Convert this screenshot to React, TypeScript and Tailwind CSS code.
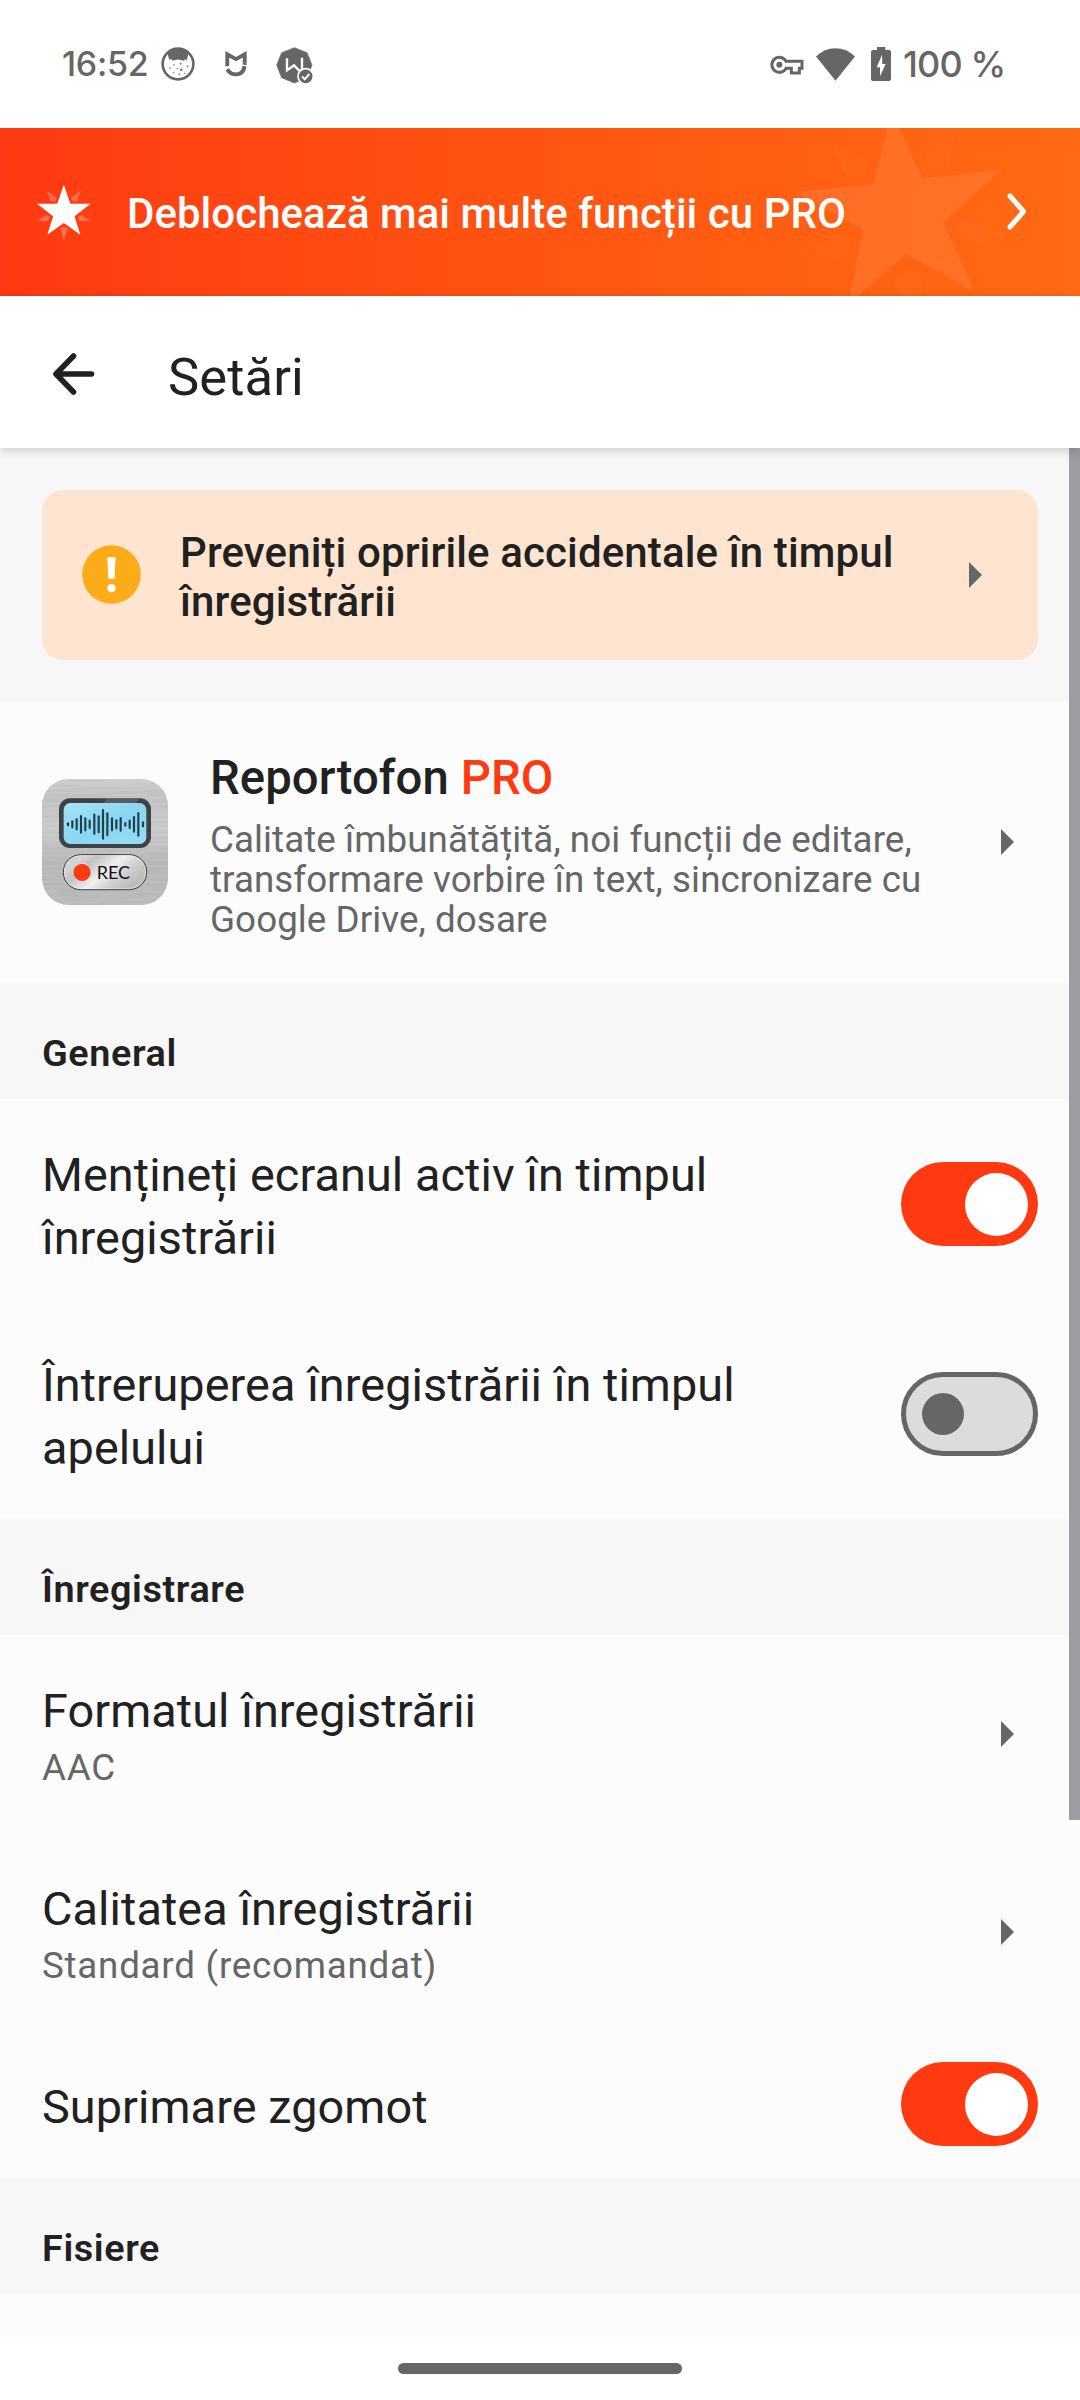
import type { ReactNode } from 'react';

/* ---------- Status bar ---------- */

function CatIcon() {
  return (
    <svg className="h-[34px] w-[34px]" viewBox="363 83 102 102">
      <circle cx="414" cy="134" r="46" fill="#fff" stroke="#666" strokeWidth="8" />
      <path d="M384 108 L388 122 L394 118 L397 124 L408 121 Q414 119 422 122 L432 124 L436 119 L440 124 L444 108 L444 102 Q414 76 384 102 Z" fill="#666" />
      <g fill="#666">
        <circle cx="402" cy="137" r="2.5" />
        <circle cx="422" cy="133" r="2.5" />
        <circle cx="390" cy="146" r="2.5" />
        <circle cx="412" cy="148" r="2" />
        <circle cx="424" cy="151" r="3.5" />
        <circle cx="442" cy="141" r="2.5" />
        <circle cx="400" cy="160" r="2" />
        <circle cx="418" cy="165" r="2.5" />
        <circle cx="434" cy="162" r="2" />
      </g>
    </svg>
  );
}

function MiIcon() {
  return (
    <svg className="h-[26px] w-[22px]" viewBox="554 94 68 80" fill="none" stroke="#666" strokeWidth="12">
      <path d="M561 141 V104 L588 119 L615 104 V130" />
      <path d="M561 150 Q570 166 589 166 Q615 165 615 130" />
      <path d="M552 146 L574 142" stroke="#fff" strokeWidth="4" />
      <path d="M600 136 L624 140" stroke="#fff" strokeWidth="4" />
    </svg>
  );
}

function OctagonIcon() {
  return (
    <svg className="h-[37px] w-[37px]" viewBox="707 80 111 111">
      <path d="M762 82 L800 97 L815 134 L800 172 L762 188 L724 172 L709 134 L724 97 Z" fill="#666" stroke="#666" strokeWidth="2" strokeLinejoin="round" />
      <path d="M740 114 V150 L761 135 L778 152 L785 148 V112" fill="none" stroke="#fff" strokeWidth="7" />
      <circle cx="796" cy="168" r="23" fill="#666" stroke="#fff" strokeWidth="5" />
      <path d="M785 168 L793 177 L807 161" fill="none" stroke="#fff" strokeWidth="6" />
    </svg>
  );
}

function KeyIcon() {
  return (
    <svg className="h-[20px] w-[34px]" viewBox="89 104 102 60">
      <path d="M137 123 H185 V144 H177 V158 H153 V144 H137 A22.5 22.5 0 1 1 137 123 Z" fill="none" stroke="#666" strokeWidth="9" />
      <circle cx="117" cy="133" r="9" fill="#666" />
    </svg>
  );
}

function WifiIcon() {
  return (
    <svg className="h-[33px] w-[39px]" viewBox="228 80 118 100">
      <path d="M287 179 L228 106 Q254 81 287 81 Q320 81 346 106 Z" fill="#666" />
    </svg>
  );
}

function BatteryIcon() {
  return (
    <svg className="h-[34px] w-[20px]" viewBox="393 78 60 102">
      <path d="M411 78 H436 V87 H447 Q453 87 453 93 V174 Q453 180 447 180 H399 Q393 180 393 174 V93 Q393 87 399 87 H411 Z" fill="#666" />
      <path d="M426 101 L410 139 H420 V166 L437 129 H427 Z" fill="#fff" />
    </svg>
  );
}

function StatusBar() {
  return (
    <div className="flex h-32 items-center bg-white pr-[75px] pl-[62px] font-[Inter] text-[#666]">
      <span className="w-[99px] text-[34px] leading-none font-medium tracking-[-0.3px] whitespace-nowrap">16:52</span>
      <CatIcon />
      <div className="ml-[30px]">
        <MiIcon />
      </div>
      <div className="ml-[29px] pt-0.5">
        <OctagonIcon />
      </div>
      <div className="ml-auto flex items-center">
        <div className="pt-0.5">
          <KeyIcon />
        </div>
        <div className="ml-[12px]">
          <WifiIcon />
        </div>
        <div className="ml-[16px]">
          <BatteryIcon />
        </div>
        <span className="ml-[12px] w-[102px] text-[36px] leading-none font-medium tracking-[-0.9px] whitespace-nowrap">100 %</span>
      </div>
    </div>
  );
}

/* ---------- PRO banner ---------- */

function StarIcon() {
  return (
    <svg className="h-[57px] w-[54px]" viewBox="106 191 157 171" preserveAspectRatio="none" fill="#fff">
      <path d="M184 193 L203 250 H262 L215 288 L232 343 L184 308 L136 343 L153 288 L106 250 H165 Z" />
      <g opacity="0.26">
        <path d="M135 211 L163 232 L159 243 H146 Z" />
        <path d="M233 211 L205 232 L209 243 H222 Z" />
        <path d="M106 303 L132 284 L143 289 L139 302 Z" />
        <path d="M262 303 L236 284 L225 289 L229 302 Z" />
        <path d="M184 360 L173 324 L184 319 L196 324 Z" />
      </g>
    </svg>
  );
}

function BannerStar() {
  return (
    <svg className="absolute top-0 right-0 h-[168px] w-[540px]" viewBox="0 24 1568 504" preserveAspectRatio="none" fill="#fff">
      <path
        opacity="0.085"
        d="M1020 -28 L1110 175 L1342 150 L1170 306 L1262 515 L1063 402 L893 557 L939 331 L742 216 L969 192 Z"
      />
      <g opacity="0.02">
        <path d="M840 62 L952 124 L944 172 L893 178 Z" />
        <path d="M1212 10 L1188 142 L1136 152 L1115 105 Z" />
        <path d="M1362 352 L1229 368 L1207 318 L1248 289 Z" />
        <path d="M763 421 L846 333 L903 351 L892 407 Z" />
        <path d="M1028 480 L1067 447 L1113 468 L1103 530 H1047 Z" />
      </g>
    </svg>
  );
}

function ProBanner() {
  return (
    <div className="relative flex h-[168px] items-center overflow-hidden bg-linear-to-r from-[#ff3911] to-[#ff6a12] pr-[52px] pl-[36.5px]">
      <BannerStar />
      <StarIcon />
      <span className="relative ml-[36.5px] pt-[3px] text-[42px] leading-[49px] font-medium tracking-[0.03px] whitespace-nowrap text-white">
        Deblochează mai multe funcții cu PRO
      </span>
      <svg className="relative ml-auto h-[38px] w-[22px]" viewBox="0 0 22 38" fill="none" stroke="#fff" strokeWidth="5" strokeLinecap="round" strokeLinejoin="round">
        <path d="M4 3 L17.5 18.5 L4 34" />
      </svg>
    </div>
  );
}

/* ---------- Header ---------- */

function Header() {
  return (
    <div className="relative z-10 flex h-[152px] items-center bg-white pl-[51px] shadow-[0_2px_10px_rgba(0,0,0,0.2)]">
      <svg className="mt-[3px] h-[44px] w-[44px]" viewBox="0 0 44 44" fill="none" stroke="#212121" strokeWidth="5.6" strokeLinecap="round" strokeLinejoin="round">
        <path d="M22.5 4 L5 22 L22.5 40" />
        <path d="M5.5 22 H40.5" />
      </svg>
      <h1 className="ml-[73px] pt-[9px] text-[52.5px] leading-[62px] tracking-[0.1px] text-[#212121]">Setări</h1>
    </div>
  );
}

/* ---------- Shared pieces ---------- */

function Caret() {
  return (
    <svg className="h-[26px] w-[13px] shrink-0" viewBox="0 0 13 26">
      <path d="M0 0 L13 13 L0 26 Z" fill="#666" />
    </svg>
  );
}

function Toggle({ on }: { on: boolean }) {
  return on ? (
    <div className="flex h-[84px] w-[137px] shrink-0 items-center justify-end rounded-full bg-[#ff3a11] pr-[10.5px]">
      <div className="h-[63px] w-[63px] rounded-full bg-white" />
    </div>
  ) : (
    <div className="flex h-[84px] w-[137px] shrink-0 items-center rounded-full border-[5px] border-[#666] bg-[#dcdcdc] pl-[16px]">
      <div className="h-[42px] w-[42px] rounded-full bg-[#666]" />
    </div>
  );
}

function WarningCard() {
  return (
    <div className="bg-[#f7f7f7] px-[42px] pt-[42px] pb-[42px]">
      <div className="flex h-[170px] items-center rounded-[21px] bg-[#ffe5cf] pr-[56px] pl-[39.5px]">
        <svg className="mb-px h-[59px] w-[59px] shrink-0" viewBox="0 0 59 59">
          <circle cx="29.5" cy="29.5" r="29.3" fill="#fbac18" />
          <path d="M25.3 12.2 H33.5 L32.6 33.8 H26.3 Z" fill="#fff" />
          <circle cx="29.5" cy="43.2" r="4.1" fill="#fff" />
        </svg>
        <p className="ml-[39.5px] w-[760px] pt-1 text-[42px] leading-[49px] font-medium tracking-[0.12px] text-[#212121]">
          Preveniți opririle accidentale în timpul înregistrării
        </p>
        <div className="mb-px ml-auto">
          <Caret />
        </div>
      </div>
    </div>
  );
}

const bars = [
  [144, 5], [157, 11], [170, 17], [183, 27], [196, 20], [209, 13], [223, 31], [236, 26],
  [249, 45], [262, 35], [276, 20], [289, 14], [302, 21], [316, 6], [329, 13], [342, 24],
  [355, 36], [369, 8],
];

function AppIcon() {
  return (
    <svg className="mb-px h-[126px] w-[126px] shrink-0" viewBox="66 117 378 378">
      <defs>
        <linearGradient id="metal" x1="0" y1="0" x2="0" y2="1">
          <stop offset="0" stopColor="#cecece" />
          <stop offset="0.12" stopColor="#c2c2c2" />
          <stop offset="0.4" stopColor="#cacaca" />
          <stop offset="0.65" stopColor="#b8b8b8" />
          <stop offset="1" stopColor="#bababa" />
        </linearGradient>
        <linearGradient id="lcd" x1="0" y1="0" x2="1" y2="1">
          <stop offset="0" stopColor="#a5e2f6" />
          <stop offset="0.5" stopColor="#8ad6f3" />
          <stop offset="1" stopColor="#97dcf4" />
        </linearGradient>
        <linearGradient id="pill" x1="0" y1="0" x2="1" y2="0.5">
          <stop offset="0" stopColor="#c4c4c4" />
          <stop offset="0.2" stopColor="#d6d6d6" />
          <stop offset="0.35" stopColor="#c2c2c2" />
          <stop offset="0.6" stopColor="#f0f0f0" />
          <stop offset="0.8" stopColor="#cfcfcf" />
          <stop offset="1" stopColor="#bdbdbd" />
        </linearGradient>
        <pattern id="brush" width="378" height="47" patternUnits="userSpaceOnUse">
          <path d="M0 3 H150 M190 9 H378 M60 17 H240 M250 24 H378 M0 31 H110 M170 39 H330" stroke="#fff" strokeOpacity="0.16" strokeWidth="2" />
          <path d="M0 12 H90 M200 5 H310 M120 28 H260 M20 43 H180" stroke="#777" strokeOpacity="0.1" strokeWidth="2" />
        </pattern>
      </defs>
      <rect x="66" y="117" width="378" height="378" rx="80" fill="url(#metal)" />
      <rect x="66" y="117" width="378" height="378" rx="80" fill="url(#brush)" />
      <rect x="117" y="175" width="276" height="149" rx="33" fill="#3f4245" />
      <path d="M262 175 H358 L348 190 H250 Z" fill="#6b6e70" opacity="0.6" />
      <rect x="131" y="189" width="248" height="123" rx="20" fill="url(#lcd)" />
      {bars.map(([x, h]) => (
        <path key={x} d={`M${x} ${253 - h + 2} V${253 + h - 2}`} stroke="#1f3f4d" strokeWidth="6.5" strokeLinecap="round" />
      ))}
      <rect x="130" y="344" width="250" height="105" rx="52" fill="url(#pill)" stroke="#3c3c3c" strokeWidth="3" />
      <rect x="133" y="347" width="244" height="99" rx="49" fill="none" stroke="#fff" strokeOpacity="0.6" strokeWidth="2" />
      <circle cx="186" cy="397" r="28" fill="#e9e4e2" />
      <circle cx="186" cy="397" r="26" fill="#fb3a16" />
      <text x="230" y="417" fontFamily="Lato" fontSize="54" fontWeight="400" fill="#111">REC</text>
    </svg>
  );
}

function ProRow() {
  return (
    <div className="flex h-[281px] items-center pr-[66px] pl-[42px]">
      <AppIcon />
      <div className="ml-[42px] w-[740px] pt-[2px]">
        <h2 className="text-[47.25px] leading-[60px] font-medium tracking-[0.08px] text-[#212121]">
          Reportofon <span className="text-[#ff3a11]">PRO</span>
        </h2>
        <p className="mt-3 text-[36.75px] leading-[40px] tracking-[0.07px] text-[#666]">
          Calitate îmbunătățită, noi funcții de editare, transformare vorbire în text, sincronizare cu Google Drive, dosare
        </p>
      </div>
      <div className="mb-px ml-auto">
        <Caret />
      </div>
    </div>
  );
}

function SectionTitle({ children }: { children: ReactNode }) {
  return (
    <div className="h-[116px] bg-[#f7f7f7] px-[42px] pt-12">
      <h3 className="text-[37.8px] leading-[44px] font-semibold tracking-[0.6px] text-[#212121]">{children}</h3>
    </div>
  );
}

function ToggleRow({ label, on, single }: { label: string; on: boolean; single?: boolean }) {
  return (
    <div className={`flex items-center justify-between px-[42px] ${single ? 'h-[147px] pb-px' : 'h-[210px]'}`}>
      <span className="w-[760px] pt-[6px] text-[46.8px] leading-[63px] tracking-[0.08px] text-[#212121]">{label}</span>
      <Toggle on={on} />
    </div>
  );
}

function ValueRow({ label, value }: { label: string; value: string }) {
  return (
    <div className="flex h-[198px] items-center justify-between pr-[66px] pl-[42px]">
      <div className="pt-[5px]">
        <div className="text-[46.8px] leading-[63px] tracking-[0.08px] text-[#212121]">{label}</div>
        <div className="text-[36.75px] leading-[50px] tracking-[0.75px] text-[#666]">{value}</div>
      </div>
      <div className="mb-px">
        <Caret />
      </div>
    </div>
  );
}

export default function App() {
  return (
    <div className="flex h-[2400px] w-[1080px] flex-col overflow-hidden bg-white font-[Roboto,sans-serif]">
      <StatusBar />
      <ProBanner />
      <Header />
      <main className="relative h-[1889px] overflow-hidden bg-[#fcfcfc]">
        <WarningCard />
        <ProRow />
        <SectionTitle>General</SectionTitle>
        <ToggleRow label="Mențineți ecranul activ în timpul înregistrării" on />
        <ToggleRow label="Întreruperea înregistrării în timpul apelului" on={false} />
        <SectionTitle>Înregistrare</SectionTitle>
        <ValueRow label="Formatul înregistrării" value="AAC" />
        <ValueRow label="Calitatea înregistrării" value="Standard (recomandat)" />
        <ToggleRow label="Suprimare zgomot" on single />
        <SectionTitle>Fisiere</SectionTitle>
        <div className="absolute top-0 right-0 h-[1372px] w-[11px] bg-[#9f9ca1]" />
      </main>
      <div className="flex h-[63px] items-center justify-center bg-white">
        <div className="h-[11px] w-[284px] rounded-full bg-[#666]" />
      </div>
    </div>
  );
}
